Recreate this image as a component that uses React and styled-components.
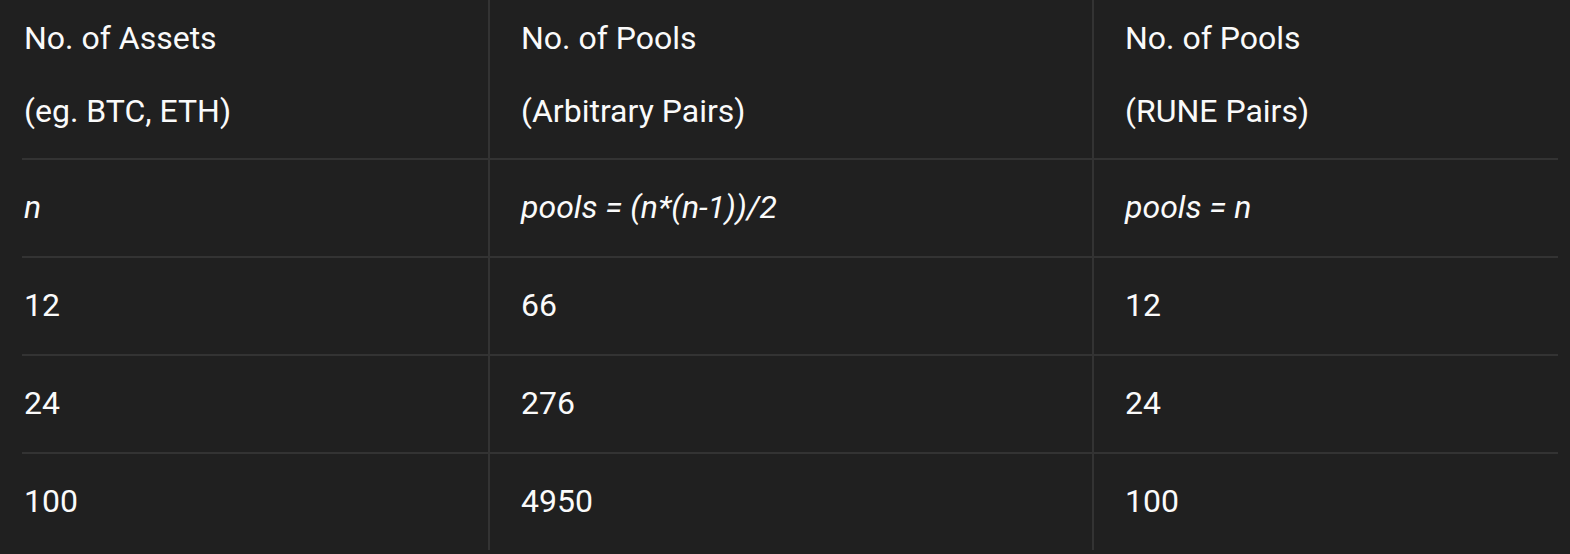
import React from 'react';
import styled, { createGlobalStyle } from 'styled-components';

const GlobalStyle = createGlobalStyle`
  *{
    box-sizing:border-box;
  }
  html, body{
    margin:0;
    padding:0;
    background:#202020;
  }
  body{
    font-family:Roboto, "Liberation Sans", sans-serif;
    color:#fafafa;
  }
`;

const rows = [
  { a: 'n', b: 'pools = (n*(n-1))/2', c: 'pools = n', formula: true },
  { a: '12', b: '66', c: '12' },
  { a: '24', b: '276', c: '24' },
  { a: '100', b: '4950', c: '100' },
];

const App = () => {
  return (
    <Page>
      <GlobalStyle />
      <Table>
        <thead>
          <tr>
            <Head $w={466}>No. of Assets<br />(eg. BTC, ETH)</Head>
            <Head $w={604}>No. of Pools<br />(Arbitrary Pairs)</Head>
            <Head $w={466}>No. of Pools<br />(RUNE Pairs)</Head>
          </tr>
        </thead>
        <tbody>
          {rows.map((row, i) => (
            <Row key={i}>
              <Cell $italic={row.formula}>{row.a}</Cell>
              <Cell $italic={row.formula}>{row.b}</Cell>
              <Cell $italic={row.formula}>{row.c}</Cell>
            </Row>
          ))}
        </tbody>
      </Table>
    </Page>
  );
};

export default App;

const Page = styled.div`
  padding:0 0 0 22px;
  min-height:554px;
  background:#202020;
`;

const Table = styled.table`
  width:1536px;
  table-layout:fixed;
  border-collapse:separate;
  border-spacing:0;
  font-size:32px;
  line-height:73px;
`;

const Head = styled.th`
  width:${p => p.$w}px;
  text-align:left;
  font-weight:400;
  padding:2px 20px 10px 31px;
  border-bottom:2px solid #333333;
  vertical-align:top;

  &:first-child{
    padding-left:2px;
  }
  & + &{
    border-left:2px solid #333333;
  }
`;

const Row = styled.tr`
  &:not(:last-child) td{
    border-bottom:2px solid #333333;
  }
`;

const Cell = styled.td`
  padding:11px 20px 12px 31px;
  font-style:${p => (p.$italic ? 'italic' : 'normal')};
  white-space:nowrap;

  &:first-child{
    padding-left:2px;
  }
  & + &{
    border-left:2px solid #333333;
  }
`;
